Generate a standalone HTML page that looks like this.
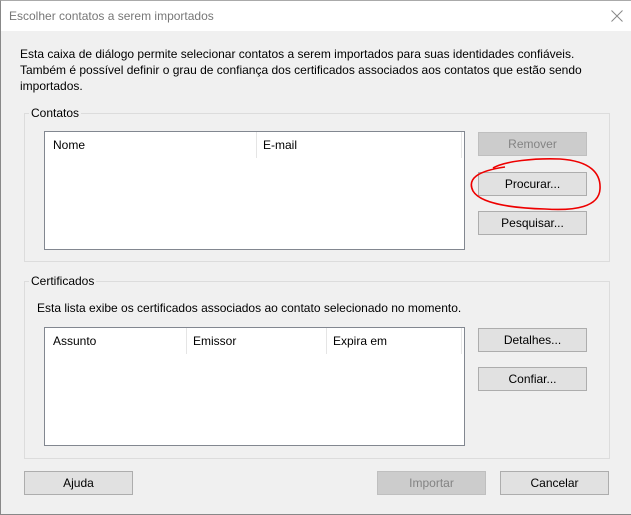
<!DOCTYPE html>
<html><head><meta charset="utf-8"><style>
*{margin:0;padding:0;box-sizing:border-box}
body{width:631px;height:515px;background:#f0f0f0;font-family:"Liberation Sans",sans-serif;font-size:12px;color:#000;position:relative;overflow:hidden}
.a{position:absolute}
.title{left:0;top:0;width:631px;height:31px;background:#fff;border-top:1px solid #aaa;border-left:1px solid #888}
.title span{position:absolute;left:8px;top:8px;color:#777}
.frame{left:0;top:31px;width:631px;height:484px;border-left:1px solid #888;border-bottom:1px solid #888}
.grp{border:1px solid #dcdcdc}
.lg{background:#f0f0f0;padding:0 2px}
.btn{background:#e1e1e1;border:1px solid #adadad;text-align:center;line-height:23px;height:24px;width:109px}
.dis{background:#cccccc;border-color:#bfbfbf;color:#838383}
.list{background:#fff;border:1px solid #828790}
.hd{position:absolute;top:6px}
.sep{position:absolute;top:0;width:1px;height:26px;background:#e5e5e5}
</style></head><body>
<div class="a title"><span>Escolher contatos a serem importados</span>
<svg class="a" style="left:610px;top:9px" width="12" height="12"><path d="M0.5 0.5L11.5 11.5M11.5 0.5L0.5 11.5" stroke="#888" stroke-width="1"/></svg></div>
<div class="a frame"></div>
<div class="a" style="left:20px;top:46px;line-height:16px;width:600px">Esta caixa de diálogo permite selecionar contatos a serem importados para suas identidades confiáveis.<br>Também é possível definir o grau de confiança dos certificados associados aos contatos que estão sendo<br>importados.</div>

<div class="a grp" style="left:24px;top:113px;width:586px;height:149px"></div>
<div class="a lg" style="left:29px;top:106px">Contatos</div>
<div class="a list" style="left:44px;top:131px;width:421px;height:119px">
<div class="hd" style="left:8px">Nome</div><div class="sep" style="left:211px"></div>
<div class="hd" style="left:218px">E-mail</div><div class="sep" style="left:416px"></div></div>
<div class="a btn dis" style="left:478px;top:132px">Remover</div>
<div class="a btn" style="left:478px;top:172px">Procurar...</div>
<div class="a btn" style="left:478px;top:211px">Pesquisar...</div>
<svg class="a" style="left:465px;top:155px" width="140" height="60"><path d="M28 13 C40 6 70 3 95 4 C125 6 136 18 135 34 C134 52 110 56 80 54 C45 53 15 48 8 36 C2 24 12 16 40 12" fill="none" stroke="#e00" stroke-width="1.6"/></svg>

<div class="a grp" style="left:24px;top:281px;width:586px;height:178px"></div>
<div class="a lg" style="left:29px;top:274px">Certificados</div>
<div class="a" style="left:37px;top:301px">Esta lista exibe os certificados associados ao contato selecionado no momento.</div>
<div class="a list" style="left:44px;top:327px;width:421px;height:119px">
<div class="hd" style="left:8px">Assunto</div><div class="sep" style="left:141px"></div>
<div class="hd" style="left:148px">Emissor</div><div class="sep" style="left:281px"></div>
<div class="hd" style="left:288px">Expira em</div><div class="sep" style="left:416px"></div></div>
<div class="a btn" style="left:478px;top:328px">Detalhes...</div>
<div class="a btn" style="left:478px;top:367px">Confiar...</div>

<div class="a btn" style="left:24px;top:471px">Ajuda</div>
<div class="a btn dis" style="left:377px;top:471px">Importar</div>
<div class="a btn" style="left:500px;top:471px">Cancelar</div>
</body></html>
